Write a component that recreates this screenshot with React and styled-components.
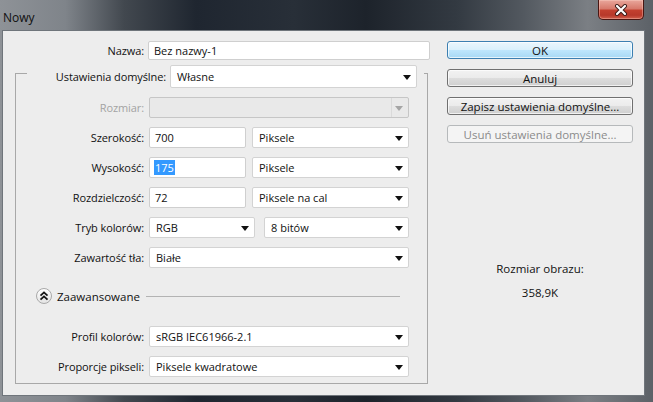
import React from "react";
import styled, { createGlobalStyle } from "styled-components";

const GlobalStyle = createGlobalStyle`
  html, body {
    margin: 0;
    padding: 0;
    background: #2b3036;
  }
  body {
    font-family: "Open Sans", "Noto Sans", sans-serif;
    font-size: 11px;
    color: #111111;
  }
`;

const Window = styled.div`
  width: 653px;
  height: 402px;
  display: flex;
  flex-direction: column;
  overflow: hidden;
  background: linear-gradient(
    90deg,
    #8e9297 0%,
    #7f848a 10%,
    #42484f 19%,
    #1f2630 30%,
    #282f38 45%,
    #1d232b 56%,
    #333a42 70%,
    #52585f 80%,
    #7b7f84 90%,
    #5c6167 100%
  );
`;

const TitleBar = styled.div`
  height: 30px;
  display: flex;
  align-items: flex-start;
  justify-content: space-between;
  flex-shrink: 0;
`;

const Title = styled.span`
  padding: 9px 0 0 3px;
  font-size: 12px;
  color: #101010;
`;

const CloseButton = styled.div`
  width: 46px;
  height: 20px;
  margin-right: 9px;
  box-sizing: border-box;
  border: 1px solid #4a1612;
  border-top: none;
  border-radius: 0 0 5px 5px;
  background: linear-gradient(180deg, #e9a79c 0%, #d77a6c 45%, #c2402f 55%, #b7382a 80%, #d0604d 100%);
  display: flex;
  align-items: center;
  justify-content: center;
  box-shadow: inset 0 0 0 1px rgba(255, 220, 210, 0.35);
`;

const Panel = styled.div`
  flex: 1;
  margin: 0 8px 6px 2px;
  border: 1px solid #6f757b;
  background: #ededed;
  display: flex;
  align-items: flex-start;
`;

const LeftColumn = styled.div`
  width: 413px;
  padding-left: 12px;
  display: flex;
  flex-direction: column;
`;

const NameRow = styled.div`
  margin-top: 10px;
  display: grid;
  grid-template-columns: 129px 282px;
  column-gap: 4px;
  align-items: center;
`;

const Label = styled.span`
  text-align: right;
  white-space: nowrap;
  letter-spacing: -0.1px;
  color: ${(p) => (p.$disabled ? "#a3a3a3" : "#111111")};
`;

const Field = styled.div`
  box-sizing: border-box;
  height: ${(p) => p.$h || 21}px;
  width: ${(p) => (p.$w ? `${p.$w}px` : "auto")};
  border: 1px solid #cfcfcf;
  border-radius: 2px;
  background: #ffffff;
  padding-left: 5px;
  display: flex;
  align-items: center;
  white-space: nowrap;
`;

const Selected = styled.span`
  background: #3399ff;
  color: #ffffff;
  margin-left: -1px;
  padding: 0 1px;
`;

const SelectBox = styled.div`
  position: relative;
  box-sizing: border-box;
  height: ${(p) => p.$h || 21}px;
  width: ${(p) => (p.$w ? `${p.$w}px` : "auto")};
  border: 1px solid ${(p) => (p.$disabled ? "#c6c6c6" : "#d3d3d3")};
  border-radius: 2px;
  background: ${(p) => (p.$disabled ? "#e9e9e9" : "#ffffff")};
  padding-left: 6px;
  display: flex;
  align-items: center;
  white-space: nowrap;
  &::after {
    content: "";
    position: absolute;
    right: 5px;
    top: 50%;
    margin-top: -2px;
    border-left: 4px solid transparent;
    border-right: 4px solid transparent;
    border-top: 5px solid ${(p) => (p.$disabled ? "#a5a5a5" : "#111111")};
  }
  &::before {
    content: "";
    display: ${(p) => (p.$disabled ? "block" : "none")};
    position: absolute;
    right: 16px;
    top: 0;
    bottom: 0;
    border-left: 1px solid #dadada;
  }
`;

const Select = ({ children, ...rest }) => (
  <SelectBox {...rest}>
    <span>{children}</span>
  </SelectBox>
);

const GroupHeader = styled.div`
  margin-top: 5px;
  height: 23px;
  display: flex;
  align-items: center;
`;

const Tick = styled.div`
  align-self: flex-start;
  margin-top: 8px;
  height: 15px;
  width: ${(p) => (p.$right ? 3 : 11)}px;
  margin-left: ${(p) => (p.$right ? 7 : 0)}px;
  border-top: 1px solid #a8a8a8;
  border-left: ${(p) => (p.$right ? "none" : "1px solid #a8a8a8")};
  border-right: ${(p) => (p.$right ? "1px solid #a8a8a8" : "none")};
`;

const HeaderLabel = styled(Label)`
  flex: 1;
  margin-right: 4px;
`;

const GroupBody = styled.div`
  border: 1px solid #a8a8a8;
  border-top: none;
  padding: 9px 0 6px 0;
  display: flex;
  flex-direction: column;
  gap: 9px;
`;

const Row = styled.div`
  display: grid;
  grid-template-columns: 128px 260px;
  column-gap: 5px;
  align-items: center;
`;

const Pair = styled.div`
  display: flex;
  justify-content: space-between;
`;

const AdvancedRow = styled.div`
  margin: 11px 0 13px 20px;
  height: 16px;
  display: flex;
  align-items: center;
`;

const ToggleCircle = styled.div`
  width: 16px;
  height: 16px;
  box-sizing: border-box;
  border: 1px solid #a9a9a9;
  border-radius: 50%;
  background: linear-gradient(180deg, #ffffff 0%, #e4e4e4 100%);
  display: flex;
  align-items: center;
  justify-content: center;
`;

const AdvancedText = styled.span`
  margin-left: 5px;
  font-size: 11.5px;
`;

const Rule = styled.div`
  flex: 1;
  margin: 0 27px 0 6px;
  border-top: 1px solid #b3b3b3;
`;

const RightColumn = styled.div`
  width: 186px;
  margin-left: 19px;
  padding-top: 10px;
  display: flex;
  flex-direction: column;
  align-items: stretch;
`;

const Buttons = styled.div`
  display: flex;
  flex-direction: column;
  gap: 10px;
`;

const Button = styled.div`
  box-sizing: border-box;
  height: 18px;
  border-radius: 3px;
  border: 1px solid ${(p) => (p.$default ? "#3c7fb1" : p.$disabled ? "#b6b9bb" : "#707070")};
  background: ${(p) =>
    p.$default
      ? "linear-gradient(180deg, #eaf6fd 0%, #d9f0fc 50%, #bee6fd 51%, #a7d9f5 100%)"
      : p.$disabled
      ? "#f4f4f4"
      : "linear-gradient(180deg, #f2f2f2 0%, #ebebeb 50%, #dddddd 51%, #cfcfcf 100%)"};
  box-shadow: ${(p) => (p.$disabled ? "none" : "inset 0 0 0 1px rgba(255,255,255,0.7)")};
  color: ${(p) => (p.$disabled ? "#8b8b8b" : "#111111")};
  display: flex;
  align-items: center;
  justify-content: center;
  white-space: nowrap;
  font-size: 11.5px;
`;

const SizeInfo = styled.div`
  margin-top: 118px;
  display: flex;
  flex-direction: column;
  align-items: center;
  gap: 8px;
  line-height: 16px;
  font-size: 11.5px;
`;

const Chevrons = () => (
  <svg width="10" height="10" viewBox="0 0 10 10">
    <path d="M1.5 4.6 L5 1.4 L8.5 4.6 M1.5 8.6 L5 5.4 L8.5 8.6" fill="none" stroke="#151515" strokeWidth="1.8" />
  </svg>
);

const CloseX = () => (
  <svg width="14" height="12" viewBox="0 0 14 12">
    <path d="M3 2 L11 10 M11 2 L3 10" stroke="#3a1a16" strokeWidth="4" strokeLinecap="round" />
    <path d="M3 2 L11 10 M11 2 L3 10" stroke="#ffffff" strokeWidth="2.2" strokeLinecap="round" />
  </svg>
);

export default function App() {
  return (
    <>
      <GlobalStyle />
      <Window>
        <TitleBar>
          <Title>Nowy</Title>
          <CloseButton>
            <CloseX />
          </CloseButton>
        </TitleBar>
        <Panel>
          <LeftColumn>
            <NameRow>
              <Label>Nazwa:</Label>
              <Field $h={19}>Bez nazwy-1</Field>
            </NameRow>

            <GroupHeader>
              <Tick />
              <HeaderLabel>Ustawienia domyślne:</HeaderLabel>
              <Select $w={247} $h={23}>Własne</Select>
              <Tick $right />
            </GroupHeader>

            <GroupBody>
              <Row>
                <Label $disabled>Rozmiar:</Label>
                <Select $disabled></Select>
              </Row>
              <Row>
                <Label>Szerokość:</Label>
                <Pair>
                  <Field $w={97}>700</Field>
                  <Select $w={157}>Piksele</Select>
                </Pair>
              </Row>
              <Row>
                <Label>Wysokość:</Label>
                <Pair>
                  <Field $w={97}>
                    <Selected>175</Selected>
                  </Field>
                  <Select $w={157}>Piksele</Select>
                </Pair>
              </Row>
              <Row>
                <Label>Rozdzielczość:</Label>
                <Pair>
                  <Field $w={97}>72</Field>
                  <Select $w={157}>Piksele na cal</Select>
                </Pair>
              </Row>
              <Row>
                <Label>Tryb kolorów:</Label>
                <Pair>
                  <Select $w={106}>RGB</Select>
                  <Select $w={145}>8 bitów</Select>
                </Pair>
              </Row>
              <Row>
                <Label>Zawartość tła:</Label>
                <Select>Białe</Select>
              </Row>

              <AdvancedRow>
                <ToggleCircle>
                  <Chevrons />
                </ToggleCircle>
                <AdvancedText>Zaawansowane</AdvancedText>
                <Rule />
              </AdvancedRow>

              <Row>
                <Label>Profil kolorów:</Label>
                <Select>sRGB IEC61966-2.1</Select>
              </Row>
              <Row>
                <Label>Proporcje pikseli:</Label>
                <Select>Piksele kwadratowe</Select>
              </Row>
            </GroupBody>
          </LeftColumn>

          <RightColumn>
            <Buttons>
              <Button $default>OK</Button>
              <Button>Anuluj</Button>
              <Button>Zapisz ustawienia domyślne...</Button>
              <Button $disabled>Usuń ustawienia domyślne...</Button>
            </Buttons>
            <SizeInfo>
              <span>Rozmiar obrazu:</span>
              <span>358,9K</span>
            </SizeInfo>
          </RightColumn>
        </Panel>
      </Window>
    </>
  );
}
